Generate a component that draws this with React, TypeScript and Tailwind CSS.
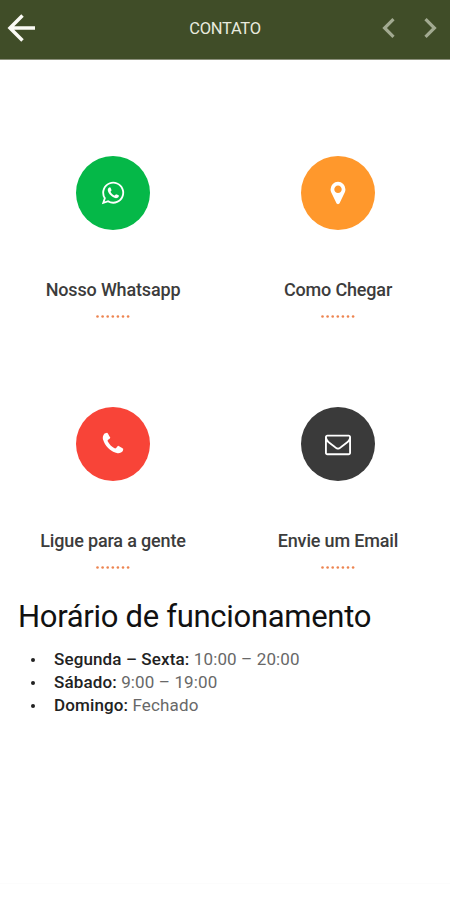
type Contact = { label: string; color: string; icon: string };

const contacts: Contact[] = [
  {
    label: "Nosso Whatsapp",
    color: "bg-[#05b848]",
    icon: "M1113 974q13 0 97.5 44t89.5 53q2 5 2 15 0 33-17 76-16 39-71 65.5t-102 26.5q-57 0-190-62-98-45-170-118t-148-185q-72-107-71-194v-8q3-91 74-158 24-22 52-22 6 0 18 1.5t19 1.5q19 0 26.5 6.5t15.5 27.5q8 20 33 88t25 75q0 21-34.5 57.5t-34.5 46.5q0 7 5 15 34 73 102 137 56 53 151 101 12 7 22 7 15 0 54-48.5t52-48.5zm-203 530q127 0 243.5-50t200.5-134 134-200.5 50-243.5-50-243.5-134-200.5-200.5-134-243.5-50-243.5 50-200.5 134-134 200.5-50 243.5q0 203 120 368l-79 233 242-77q158 104 345 104zm0-1382q153 0 292.5 60t240.5 161 161 240.5 60 292.5-60 292.5-161 240.5-240.5 161-292.5 60q-195 0-365-94l-417 134 136-405q-108-178-108-389 0-153 60-292.5t161-240.5 240.5-161 292.5-60z",
  },
  {
    label: "Como Chegar",
    color: "bg-[#ff982c]",
    icon: "M1152 640q0-106-75-181t-181-75-181 75-75 181 75 181 181 75 181-75 75-181zm256 0q0 109-33 179l-364 774q-16 33-47.5 52t-67.5 19-67.5-19-46.5-52l-365-774q-33-70-33-179 0-212 150-362t362-150 362 150 150 362z",
  },
  {
    label: "Ligue para a gente",
    color: "bg-[#f84438]",
    icon: "M1600 1240q0 27-10 70.5t-21 68.5q-21 50-122 106-94 51-186 51-27 0-53-3.5t-57.5-12.5-47-14.5-55.5-20.5-49-18q-98-35-175-83-127-79-264-216t-216-264q-48-77-83-175-3-9-18-49t-20.5-55.5-14.5-47-12.5-57.5-3.5-53q0-92 51-186 56-101 106-122 25-11 68.5-21t70.5-10q14 0 21 3 18 6 53 76 11 19 30 54t35 63.5 31 53.5q3 4 17.5 25t21.5 35.5 7 28.5q0 20-28.5 50t-62 55-62 53-28.5 46q0 9 5 22.5t8.5 20.5 14 24 11.5 19q76 137 174 235t235 174q2 1 19 11.5t24 14 20.5 8.5 22.5 5q18 0 46-28.5t53-62 55-62 50-28.5q14 0 28.5 7t35.5 21.5 25 17.5q25 15 53.5 31t63.5 35 54 30q70 35 76 53 3 7 3 21z",
  },
  {
    label: "Envie um Email",
    color: "bg-[#3a3a3a]",
    icon: "M1664 1504v-768q-32 36-69 66-268 206-426 338-51 43-83 67t-86.5 48.5-102.5 24.5h-2q-48 0-102.5-24.5t-86.5-48.5-83-67q-158-132-426-338-37-30-69-66v768q0 13 9.5 22.5t22.5 9.5h1472q13 0 22.5-9.5t9.5-22.5zm0-1051v-24.5l-.5-13-3-12.5-5.5-9-9-7.5-14-2.5h-1472q-13 0-22.5 9.5t-9.5 22.5q0 168 147 284 193 152 401 317 6 5 35 29.5t46 37.5 44.5 31.5 50.5 27.5 43 9h2q20 0 43-9t50.5-27.5 44.5-31.5 46-37.5 35-29.5q208-165 401-317 54-43 100.5-115.5t46.5-131.5zm128-37v1088q0 66-47 113t-113 47h-1472q-66 0-113-47t-47-113v-1088q0-66 47-113t113-47h1472q66 0 113 47t47 113z",
  },
];

const hours = [
  ["Segunda – Sexta:", "10:00 – 20:00"],
  ["Sábado:", "9:00 – 19:00"],
  ["Domingo:", "Fechado"],
];

function Dots() {
  return (
    <svg className="mt-[13px] h-[3px] w-[34px]" viewBox="0 0 34 3" fill="#ed8450">
      {[1.5, 6.6, 11.7, 16.8, 21.9, 27, 32.1].map((x) => (
        <circle key={x} cx={x} cy="1.5" r="1.3" />
      ))}
    </svg>
  );
}

function ContactTile({ label, color, icon }: Contact) {
  return (
    <a className="flex h-[251px] flex-col items-center pl-px">
      <span className={`flex size-[74px] items-center justify-center rounded-full ${color}`}>
        <svg className="size-[26px]" viewBox="0 0 1792 1792" fill="#fff">
          <path d={icon} />
        </svg>
      </span>
      <span className="mt-[48px] text-[18px] leading-6 font-medium tracking-[-0.16px] whitespace-nowrap text-[#3c3c3c]">
        {label}
      </span>
      <Dots />
    </a>
  );
}

export default function App() {
  return (
    <div className="flex h-[900px] w-[450px] flex-col overflow-hidden bg-white font-['Roboto',sans-serif]">
      <header className="grid h-[60px] grid-cols-[1fr_auto_1fr] items-center border-b border-[#8c907c] bg-[#404d28] pb-[3px]">
        <svg className="ml-[7px] h-[28px] w-[29px]" viewBox="0 0 29 28" fill="none" stroke="#fafaf5" strokeWidth="3.5">
          <path d="M28 14H3M15.5 1.5L3 14l12.5 12.5" />
        </svg>
        <h1 className="pt-px text-[16.5px] leading-5 tracking-[-0.3px] text-[#e8eade]">CONTATO</h1>
        <div className="mr-[13px] flex justify-end gap-[29px]">
          <svg className="h-[20px] w-[13px]" viewBox="0 0 13 20" fill="none" stroke="#a2aa91" strokeWidth="3.2">
            <path d="M11.5 1.2L2.6 10l8.9 8.8" />
          </svg>
          <svg className="h-[20px] w-[13px]" viewBox="0 0 13 20" fill="none" stroke="#a2aa91" strokeWidth="3.2">
            <path d="M1.5 1.2l8.9 8.8-8.9 8.8" />
          </svg>
        </div>
      </header>
      <main className="flex-1">
        <section className="grid grid-cols-2 pt-[96px]">
          {contacts.map((c) => (
            <ContactTile key={c.label} {...c} />
          ))}
        </section>
        <section className="-mt-[59px] pl-[18px]">
          <h2 className="text-[31px] leading-[36px] tracking-[-0.3px] whitespace-nowrap text-[#111]">
            Horário de funcionamento
          </h2>
          <ul className="mt-[13px]">
            {hours.map(([day, time]) => (
              <li key={day} className="flex h-[23px] items-center text-[17px] leading-[23px] text-[#686868]">
                <span className="mr-[19px] ml-[13px] size-[4px] rounded-full bg-[#222]" />
                <span className="tracking-[0.13px]">
                  <b className="font-medium text-[#222]">{day}</b> {time}
                </span>
              </li>
            ))}
          </ul>
        </section>
      </main>
      <footer className="h-[17px] border-t border-[#fcfcfc]" />
    </div>
  );
}
